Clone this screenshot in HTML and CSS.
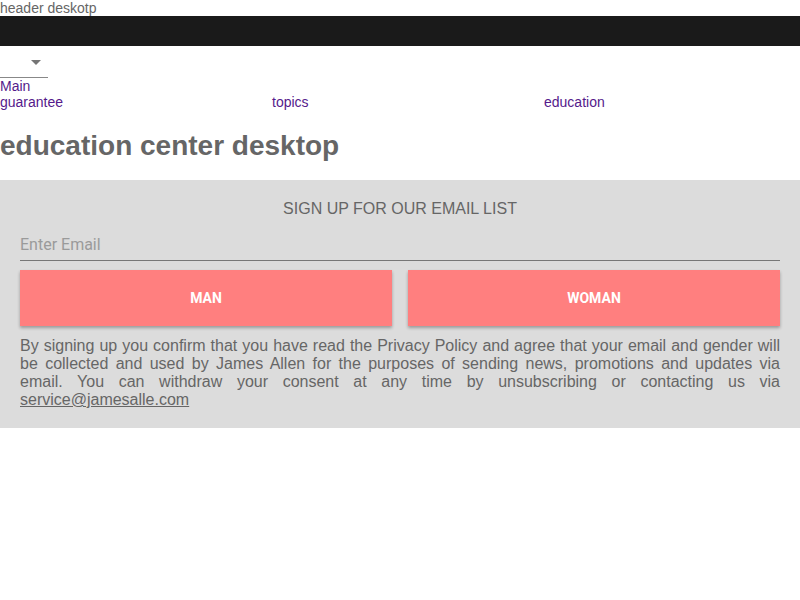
FILE: index.html
```html
<!DOCTYPE html>
<html>
<head>
<meta charset="utf-8">
<link rel="stylesheet" href="styles.css">
</head>
<body>
<div class="header-label">header deskotp</div>
<div class="topbar"></div>
<div class="select-wrap">
  <div class="select"><span class="arrow"></span></div>
</div>
<a class="link main-link" href="#">Main</a>
<nav class="links">
  <a class="link" href="#">guarantee</a>
  <a class="link" href="#">topics</a>
  <a class="link" href="#">education</a>
</nav>
<h1 class="title">education center desktop</h1>
<section class="signup">
  <div class="signup-title">SIGN UP FOR OUR EMAIL LIST</div>
  <input class="email" type="text" placeholder="Enter Email">
  <div class="buttons">
    <button class="btn">MAN</button>
    <button class="btn">WOMAN</button>
  </div>
  <p class="legal">By signing up you confirm that you have read the Privacy Policy and agree that your email and gender will be collected and used by James Allen for the purposes of sending news, promotions and updates via email. You can withdraw your consent at any time by unsubscribing or contacting us via <a class="mail" href="#">service@jamesalle.com</a></p>
</section>
</body>
</html>
```
FILE: styles.css
```css
html, body {
  margin: 0;
  padding: 0;
  background: #fff;
  font-family: "Liberation Sans", Arial, sans-serif;
  color: #666;
}
.header-label {
  font-size: 14px;
  line-height: 16px;
  height: 16px;
  color: #666;
}
.topbar {
  height: 30px;
  background: #1a1a1a;
}
.select-wrap {
  padding-top: 10px;
}
.select {
  width: 48px;
  height: 21px;
  border-bottom: 1px solid #888;
  position: relative;
}
.arrow {
  position: absolute;
  left: 31px;
  top: 4px;
  width: 0;
  height: 0;
  border-left: 5px solid transparent;
  border-right: 5px solid transparent;
  border-top: 5px solid #757575;
}
.link {
  color: #551a8b;
  text-decoration: none;
  font-size: 14px;
  line-height: 16px;
}
.main-link {
  display: block;
}
.links {
  display: grid;
  grid-template-columns: repeat(3, 1fr);
  column-gap: 16px;
}
.title {
  margin: 0;
  padding: 19px 0 17px;
  font-size: 28px;
  line-height: 34px;
  font-weight: bold;
  color: #666;
}
.signup {
  background: #dcdcdc;
  padding: 19px 20px 19px;
}
.signup-title {
  text-align: center;
  font-size: 16px;
  line-height: 20px;
  color: #666;
}
.email {
  display: block;
  width: 100%;
  box-sizing: border-box;
  margin-top: 9px;
  height: 33px;
  border: none;
  border-bottom: 1px solid #777;
  background: transparent;
  font-family: Roboto, sans-serif;
  font-size: 16px;
  padding: 0;
  color: #666;
  outline: none;
}
.email::placeholder {
  color: #9a9a9a;
}
.buttons {
  display: grid;
  grid-template-columns: 1fr 1fr;
  column-gap: 16px;
  margin-top: 9px;
}
.btn {
  height: 56px;
  border: none;
  background: #ff7f7f;
  color: #fff;
  font-family: Roboto, sans-serif;
  font-weight: bold;
  font-size: 14px;
  box-shadow: 0 2px 3px rgba(0,0,0,0.3);
  padding: 0;
}
.legal {
  margin: 11px 0 0;
  font-size: 16px;
  line-height: 18px;
  text-align: justify;
  color: #666;
}
.mail {
  color: #666;
  text-decoration: underline;
}
```
